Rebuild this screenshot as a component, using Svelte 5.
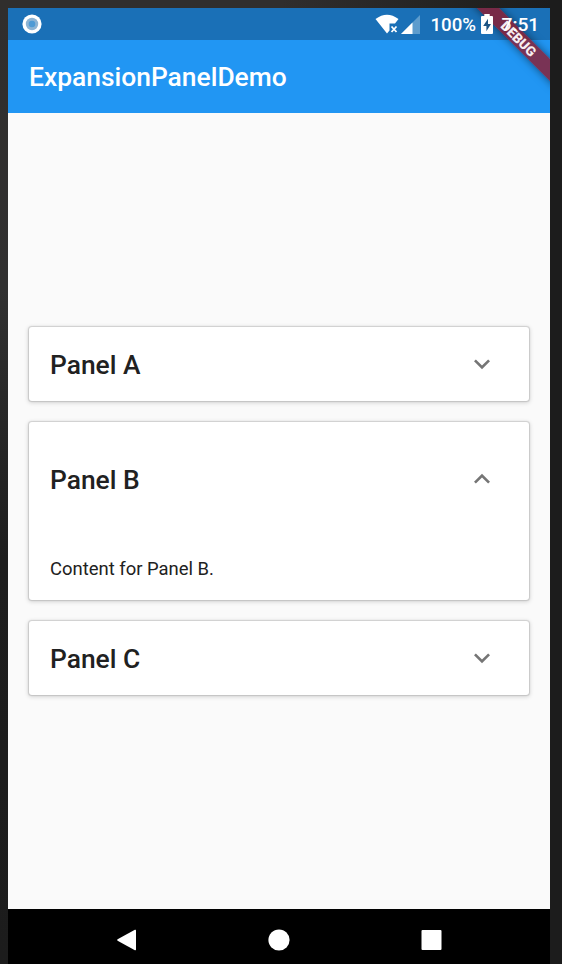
<script>
  let panels = $state([
    { name: 'Panel A', open: false },
    { name: 'Panel B', open: true },
    { name: 'Panel C', open: false }
  ]);
</script>

<div class="device">
  <div class="screen">
    <div class="status">
      <svg class="dot" width="20" height="20" viewBox="0 0 20 20">
        <circle cx="10" cy="10" r="9.6" fill="#fff" />
        <circle cx="10" cy="10" r="6.2" fill="#8db4d4" />
        <circle cx="10" cy="10" r="3.3" fill="#4f9bd5" />
      </svg>
      <svg class="wifi" width="25" height="20" viewBox="0 0 25 20">
        <path d="M.5 5Q12 -3.5 23.5 5L20 9.5H14.5V16.5L12 19.5Z" fill="#fff" />
        <path d="M16.5 12.5l5 5.5M21.5 12.5l-5 5.5" stroke="#fff" stroke-width="1.8" />
      </svg>
      <svg class="signal" width="19" height="19" viewBox="0 0 19 19">
        <path d="M0 19L19 0V19Z" fill="#5d9ccd" />
        <path d="M0 19L11.5 7.5V19Z" fill="#fff" />
      </svg>
      <span class="percent">100%</span>
      <svg class="battery" width="12" height="20" viewBox="0 0 12 20">
        <path d="M3.3 0h5.4v2H11q1 0 1 1v16q0 1-1 1H1q-1 0-1-1V3q0-1 1-1h2.3Z" fill="#fff" />
        <path d="M7 4.8L2.2 12H5.4V17.2L10 10H7Z" fill="#1d5484" />
      </svg>
      <span class="time">7:51</span>
    </div>
    <header>ExpansionPanelDemo</header>
    <main>
      {#each panels as panel}
        <section class="card">
          <button class="head" class:open={panel.open} onclick={() => (panel.open = !panel.open)}>
            <span>{panel.name}</span>
            <svg width="32" height="32" viewBox="0 0 24 24">
              <path
                d={panel.open
                  ? 'M12 8l-6 6 1.41 1.41L12 10.83l4.59 4.58L18 14z'
                  : 'M16.59 8.59L12 13.17 7.41 8.59 6 10l6 6 6-6z'}
                fill="#757575"
              />
            </svg>
          </button>
          {#if panel.open}
            <p>Content for {panel.name}.</p>
          {/if}
        </section>
      {/each}
    </main>
    <nav>
      <svg width="22" height="22" viewBox="0 0 22 22"><path d="M2.6 10.3L19.9.8Q21 .3 21 1.4V20.6Q21 21.7 19.9 21.2L2.6 11.8Q1.5 11 2.6 10.3Z" fill="#fff" /></svg>
      <svg width="22" height="22" viewBox="0 0 22 22"><circle cx="11" cy="11" r="10.6" fill="#fff" /></svg>
      <svg width="22" height="22" viewBox="0 0 22 22"><rect x="0.5" y="1" width="20" height="20" rx="1" fill="#fff" /></svg>
    </nav>
    <div class="corner"><div class="ribbon"><span>DEBUG</span></div></div>
  </div>
</div>

<style>
  .device {
    box-sizing: border-box;
    width: 562px;
    height: 964px;
    padding: 8px 12px 0 8px;
    background: linear-gradient(90deg, transparent 50%, #1c1c1c 98%), linear-gradient(#302e2d, #303030 30%, #1e1e1e 58%, #1c1c1c);
    font-family: Roboto, sans-serif;
    overflow: hidden;
  }
  .screen {
    position: relative;
    display: flex;
    flex-direction: column;
    height: 956px;
    background: #fafafa;
  }
  .status {
    display: flex;
    align-items: center;
    flex: none;
    box-sizing: border-box;
    height: 32px;
    padding: 0 10.5px 0 14px;
    background: #1a70b7;
    color: #fff;
    font-size: 18.7px;
    font-weight: 500;
    line-height: 34px;
  }
  .status > * { flex: none; z-index: 2; }
  .wifi { margin-left: auto; }
  .signal { margin-left: 1px; }
  .percent { width: 46px; margin-left: 11px; padding-top: 1px; white-space: nowrap; }
  .battery { margin-left: 4px; }
  .time { width: 38px; margin-left: 9px; padding-top: 1px; font-size: 19.2px; white-space: nowrap; }
  header {
    flex: none;
    box-sizing: border-box;
    height: 73px;
    padding: 1px 21px 0;
    background: #2196f3;
    color: #fff;
    font-size: 26.4px;
    font-weight: 500;
    line-height: 73px;
  }
  main {
    display: flex;
    flex-direction: column;
    justify-content: center;
    gap: 21px;
    flex: 1;
    padding: 0 21px;
  }
  .card {
    border-radius: 3px;
    background: #fff;
    box-shadow: 0 0 1px 0.5px rgba(0, 0, 0, 0.12), 0 1px 4px 1px rgba(0, 0, 0, 0.15);
  }
  .head {
    display: flex;
    align-items: center;
    justify-content: space-between;
    width: 100%;
    height: 74px;
    padding: 1px 31.5px 0 21px;
    border: 0;
    background: none;
    color: #212121;
    font: 500 26.4px Roboto, sans-serif;
  }
  .head svg { margin-bottom: 1.5px; }
  .head.open { height: 116px; padding-bottom: 2px; }
  p {
    box-sizing: border-box;
    height: 62px;
    margin: 0;
    padding: 20px 21px 0;
    color: #212121;
    font-size: 18.46px;
    line-height: 22px;
  }
  nav {
    display: flex;
    align-items: center;
    justify-content: center;
    gap: 131px;
    flex: none;
    box-sizing: border-box;
    height: 55px;
    padding-top: 7px;
    background: #000;
  }
  .corner {
    position: absolute;
    z-index: 1;
    top: 0;
    right: 0;
    width: 110px;
    height: 110px;
    overflow: hidden;
  }
  .ribbon {
    position: absolute;
    left: 19px;
    top: 22.7px;
    width: 120px;
    height: 16px;
    transform: rotate(45deg);
    background: rgba(150, 20, 35, 0.76);
    box-shadow: 0 0 8px rgba(0, 0, 0, 0.5);
    color: #f6edf0;
    font-size: 13.6px;
    font-weight: 900;
    line-height: 16px;
    text-align: center;
  }
  .ribbon span {
    display: block;
    padding-right: 1px;
  }
</style>
